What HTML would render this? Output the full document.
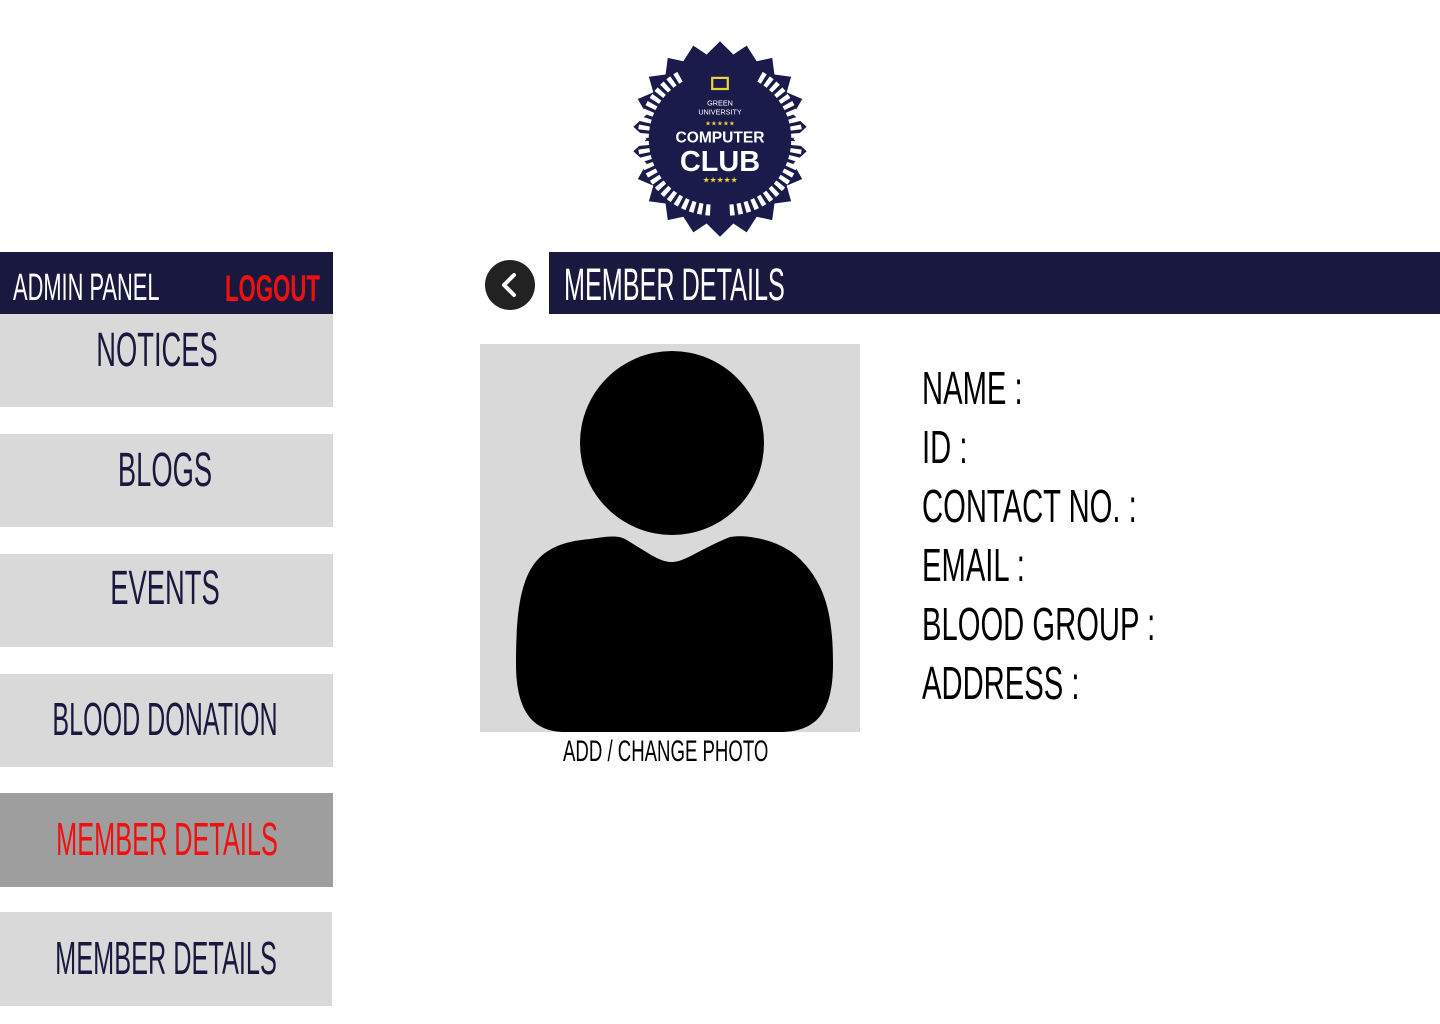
<!DOCTYPE html>
<html><head><meta charset="utf-8"><style>
*{margin:0;padding:0;box-sizing:border-box}
body{width:1440px;height:1024px;background:#fff;position:relative;overflow:hidden;font-family:"Liberation Sans",sans-serif}
.a{position:absolute;line-height:1;white-space:nowrap}
.nav{background:#19193f}
.box{position:absolute;left:0;width:333px;background:#d9d9d9}
.m{position:absolute;width:0;line-height:1;white-space:nowrap;color:#19193f;font-size:48px}
.m span{position:absolute;left:0;transform:translateX(-50%) scaleX(.57);display:block}
.f{position:absolute;left:922px;font-size:46px;color:#000;line-height:1;white-space:nowrap;transform:scaleX(.635);transform-origin:0 0}
</style></head><body>
<svg class="a" style="left:620px;top:39px" width="200" height="200" viewBox="-90 -90 180 180">
<polygon fill="#1b1b4b" points="
0,-88 12,-76 24,-84 33,-70 47,-73 49,-58 64,-56 60,-42 74,-36 66,-22 78,-11 66,0 78,11 66,22 74,36 60,42 64,56 49,58 47,73 33,70 24,84 12,76 0,88 -12,76 -24,84 -33,70 -47,73 -49,58 -64,56 -60,42 -74,36 -66,22 -78,11 -66,0 -78,-11 -66,-22 -74,-36 -60,-42 -64,-56 -49,-58 -47,-73 -33,-70 -24,-84 -12,-76"/>
<path d="M-36,-56 A64,64 0 0 0 -8,64 M36,-56 A64,64 0 0 1 8,64" stroke="#fff" stroke-width="10" stroke-dasharray="4 3" fill="none"/>
<rect x="-7" y="-55" width="14" height="10" fill="none" stroke="#e6d43a" stroke-width="2"/>
<text x="0" y="-30" fill="#fff" font-size="6.5" text-anchor="middle">GREEN</text>
<text x="0" y="-22" fill="#fff" font-size="6.5" text-anchor="middle">UNIVERSITY</text>
<text x="0" y="-12" fill="#e6d43a" font-size="6" text-anchor="middle">★★★★★</text>
<text x="0" y="3" fill="#fff" font-size="14" font-weight="bold" text-anchor="middle">COMPUTER</text>
<text x="0" y="29" fill="#fff" font-size="26" font-weight="bold" text-anchor="middle">CLUB</text>
<text x="0" y="39" fill="#e6d43a" font-size="7" text-anchor="middle">★★★★★</text>
</svg>
<div class="a nav" style="left:0;top:252px;width:333px;height:62px"></div>
<div class="a" style="left:13px;top:269px;color:#fff;font-size:38px;transform:scaleX(.575);transform-origin:0 0">ADMIN PANEL</div>
<div class="a" style="left:225px;top:270px;color:#f01010;font-size:37px;font-weight:bold;transform:scaleX(.6);transform-origin:0 0">LOGOUT</div>
<div class="box" style="top:314px;height:93px"></div>
<div class="box" style="top:434px;height:93px"></div>
<div class="box" style="top:554px;height:93px"></div>
<div class="box" style="top:674px;height:93px"></div>
<div class="box" style="top:793px;height:94px;background:#9e9e9e"></div>
<div class="box" style="top:912px;height:94px;width:332px"></div>
<div class="m" style="left:157px;top:327px"><span>NOTICES</span></div>
<div class="m" style="left:165px;top:447px"><span>BLOGS</span></div>
<div class="m" style="left:165px;top:565px"><span>EVENTS</span></div>
<div class="m" style="left:165px;top:696px;font-size:46px"><span style="transform:translateX(-50%) scaleX(.545)">BLOOD DONATION</span></div>
<div class="m" style="left:167px;top:816px;font-size:46px;color:#f01010"><span style="transform:translateX(-50%) scaleX(.55)">MEMBER DETAILS</span></div>
<div class="m" style="left:166px;top:935px;font-size:46px"><span style="transform:translateX(-50%) scaleX(.55)">MEMBER DETAILS</span></div>
<svg class="a" style="left:485px;top:260px" width="50" height="50"><circle cx="25" cy="25" r="25" fill="#222"/><path d="M29,15 L19,25 L29,35" stroke="#fff" stroke-width="4" fill="none" stroke-linecap="round" stroke-linejoin="round"/></svg>
<div class="a nav" style="left:549px;top:252px;width:891px;height:62px"></div>
<div class="a" style="left:564px;top:262px;color:#fff;font-size:45px;transform:scaleX(.56);transform-origin:0 0">MEMBER DETAILS</div>
<div class="a" style="left:480px;top:344px;width:380px;height:388px;background:#d9d9d9;overflow:hidden">
<svg width="380" height="388"><circle cx="192" cy="99" r="92" fill="#000"/>
<path d="M36,320 C36,230 50,200 110,195 C120,194 135,190 145,195 C170,210 180,218 192,218 C205,218 220,205 250,193 C265,190 300,195 320,215 C345,240 353,270 353,320 C353,370 335,388 300,388 L85,388 C55,388 36,370 36,320 Z" fill="#000"/></svg></div>
<div class="a" style="left:563px;top:737px;font-size:30px;color:#000;transform:scaleX(.62);transform-origin:0 0">ADD / CHANGE PHOTO</div>
<div class="f" style="top:365px">NAME :</div>
<div class="f" style="top:424px">ID :</div>
<div class="f" style="top:483px">CONTACT NO. :</div>
<div class="f" style="top:542px">EMAIL :</div>
<div class="f" style="top:601px">BLOOD GROUP :</div>
<div class="f" style="top:660px">ADDRESS :</div>
</body></html>
